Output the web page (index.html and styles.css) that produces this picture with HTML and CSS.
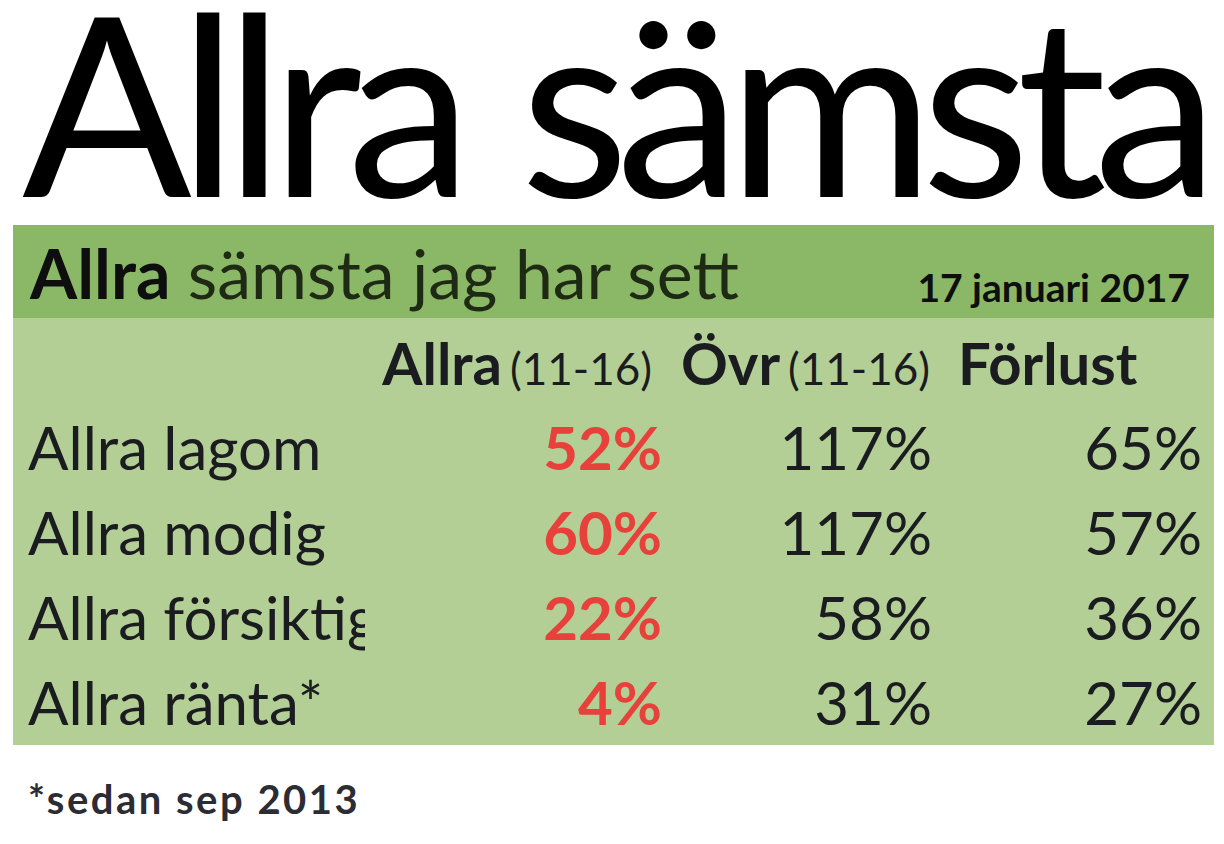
FILE: index.html
```html
<!DOCTYPE html>
<html lang="sv">
<head>
<meta charset="utf-8">
<title>Allra sämsta</title>
<link rel="stylesheet" href="styles.css">
</head>
<body>
<h1 class="title">Allra sämsta</h1>
<section class="panel">
  <header class="panel-head">
    <span class="head-title"><b>Allra</b> sämsta jag har sett</span>
    <span class="date">17 januari 2017</span>
  </header>
  <div class="grid">
    <div class="cell label"></div>
    <div class="cell colhead"><b>Allra</b><small>(11-16)</small></div>
    <div class="cell colhead"><b>Övr</b><small>(11-16)</small></div>
    <div class="cell colhead left"><b>Förlust</b></div>

    <div class="cell label">Allra lagom</div>
    <div class="cell num red">52%</div>
    <div class="cell num">117%</div>
    <div class="cell num">65%</div>

    <div class="cell label">Allra modig</div>
    <div class="cell num red">60%</div>
    <div class="cell num">117%</div>
    <div class="cell num">57%</div>

    <div class="cell label">Allra försiktig</div>
    <div class="cell num red">22%</div>
    <div class="cell num">58%</div>
    <div class="cell num">36%</div>

    <div class="cell label">Allra ränta*</div>
    <div class="cell num red">4%</div>
    <div class="cell num">31%</div>
    <div class="cell num">27%</div>
  </div>
</section>
<p class="note">*sedan sep 2013</p>
</body>
</html>
```
FILE: styles.css
```css
html, body {
  margin: 0;
  padding: 0;
  background: #ffffff;
}
body {
  font-family: Lato, "Open Sans", sans-serif;
  color: #1a1c20;
  width: 1224px;
  height: 844px;
  overflow: hidden;
}
.title {
  margin: 0;
  padding-left: 22px;
  height: 225px;
  font-size: 251px;
  line-height: 200px;
  font-weight: 400;
  letter-spacing: -13px;
  word-spacing: 10px;
  color: #000;
  white-space: nowrap;
}
.panel {
  margin-left: 13px;
  width: 1201px;
  background: #b3cf96;
}
.panel-head {
  height: 93px;
  box-sizing: border-box;
  background: #8bb867;
  display: flex;
  align-items: flex-end;
  justify-content: space-between;
  padding: 0 24px 6px 17px;
}
.head-title {
  font-size: 68px;
  line-height: 78px;
  color: #1e2a14;
  white-space: nowrap;
}
.head-title b {
  font-weight: 700;
  color: #0e0e0e;
}
.date {
  font-size: 39px;
  line-height: 46px;
  padding-bottom: 2px;
  font-weight: 700;
  color: #0e0e0e;
}
.grid {
  display: grid;
  grid-template-columns: 337px 297px 270px 270px;
  grid-auto-rows: 85px;
  padding: 2px 12px 0 15px;
  box-sizing: border-box;
}
.cell {
  font-size: 60px;
  line-height: 85px;
  white-space: nowrap;
  overflow: hidden;
}
.num {
  text-align: right;
}
.red {
  color: #e8403a;
  font-weight: 700;
}
.colhead {
  text-align: right;
  padding-right: 10px;
  font-size: 58px;
}
.colhead + .colhead {
  padding-right: 2px;
}
.colhead b {
  font-weight: 700;
}
.colhead small {
  font-size: 44px;
  margin-left: 8px;
}
.colhead.left {
  text-align: left;
  padding-left: 26px;
}
.note {
  margin: 32px 0 0 28px;
  font-size: 40px;
  line-height: 44px;
  font-weight: 700;
  letter-spacing: 2.5px;
  color: #2c2c34;
}
```
